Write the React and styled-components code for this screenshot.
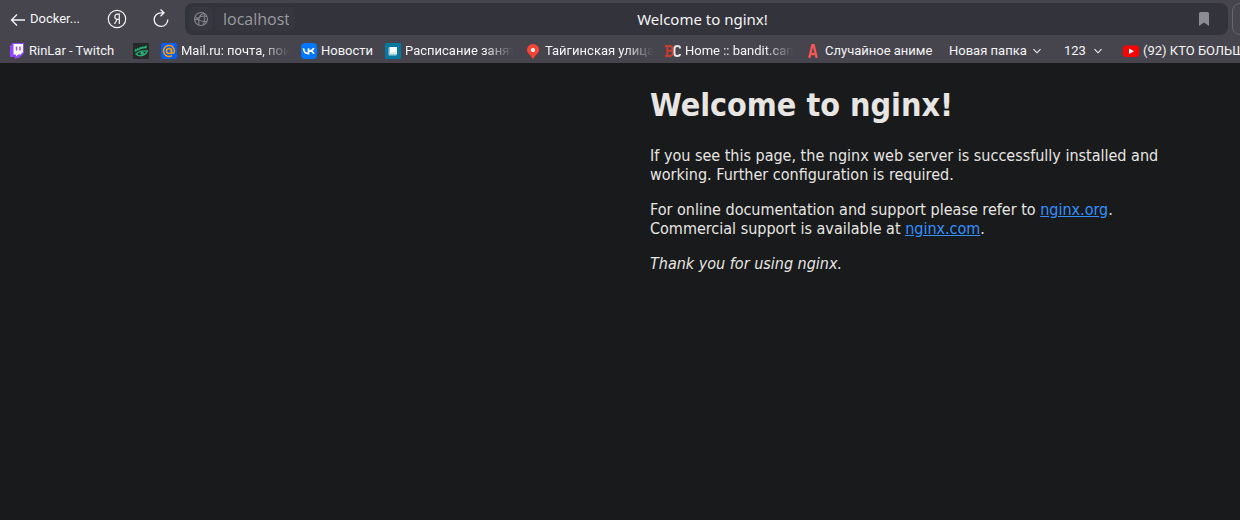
import React from "react";
import styled, { createGlobalStyle } from "styled-components";

const GlobalStyle = createGlobalStyle`
  * { box-sizing: border-box; }
  body { margin: 0; background: #181a1b; overflow-x: hidden; }
`;

const Window = styled.div`
  min-height: 100vh;
  overflow: hidden;
  background: #181a1b;
  font-family: "Noto Sans", sans-serif;
`;

const Chrome = styled.header`
  background: #46454e;
  color: #f4f4f5;
`;

const Toolbar = styled.div`
  display: flex;
  align-items: center;
  height: 38px;
  padding-left: 10px;
`;

const ToolButton = styled.button`
  display: flex;
  align-items: center;
  flex: none;
  width: ${(p) => p.$width}px;
  height: 24px;
  gap: 4px;
  padding: 0;
  border: 0;
  background: none;
  color: inherit;
  font: 13px/20px Roboto, sans-serif;
  white-space: nowrap;
`;

const AddressBar = styled.div`
  flex: 1;
  display: grid;
  grid-template-columns: 110px 1fr 118px;
  align-items: center;
  height: 32px;
  border-radius: 8px;
  background: #33333b;
`;

const Site = styled.div`
  display: flex;
  gap: 2px;
  padding-left: 4px;
`;

const SiteInfo = styled.button`
  display: grid;
  place-items: center;
  flex: none;
  width: 24px;
  height: 24px;
  padding: 0;
  border: 0;
  border-radius: 6px;
  background: #37373f;
  color: #85848b;
`;

const AddressInput = styled.input`
  flex: none;
  width: 80px;
  height: 24px;
  padding: 0 6px 0 8px;
  border: 0;
  border-radius: 6px;
  background: #36363e;
  color: #9b9aa1;
  font: 16px/24px "Open Sans", "Noto Sans", sans-serif;
`;

const PageTitle = styled.div`
  text-align: center;
  font-size: 15px;
  line-height: 24px;
  white-space: nowrap;
`;

const SaveButton = styled.button`
  justify-self: end;
  display: grid;
  place-items: center;
  width: 24px;
  height: 24px;
  margin-right: 12px;
  padding: 0;
  border: 0;
  background: none;
  color: #8c8b91;
`;

const EdgeButton = styled.button`
  flex: none;
  width: 32px;
  height: 32px;
  margin: 0 -24px 0 4px;
  border: 1px solid #66656d;
  border-radius: 8px;
  background: none;
`;

const Bookmarks = styled.nav`
  display: flex;
  align-items: center;
  gap: 12px;
  height: 25px;
  padding-left: 9px;
  overflow: hidden;
`;

const Bookmark = styled.a`
  display: flex;
  align-items: center;
  flex: none;
  gap: 4px;
  color: inherit;
  text-decoration: none;
`;

const Folder = styled.button`
  display: flex;
  align-items: center;
  justify-content: space-between;
  flex: none;
  width: ${(p) => p.$width}px;
  margin-left: ${(p) => p.$space}px;
  padding: 0;
  border: 0;
  background: none;
  color: inherit;
  font: 13px/20px Roboto, sans-serif;
  white-space: nowrap;
`;

const LastBookmark = styled(Bookmark)`
  margin-left: 8px;
`;

const Label = styled.span`
  width: ${(p) => p.$width}px;
  overflow: ${(p) => (p.$fade ? "hidden" : "visible")};
  white-space: nowrap;
  font: 13px/20px Roboto, sans-serif;
  mask-image: ${(p) =>
    p.$fade ? "linear-gradient(to right, #000 calc(100% - 28px), transparent)" : "none"};
`;

const Page = styled.main`
  width: 560px;
  max-width: 100%;
  margin: 0 30px 0 auto;
  padding-top: 22px;
  color: #e8e6e3;
  font-family: Tahoma, "DejaVu Sans Condensed", "DejaVu Sans", sans-serif;
  font-stretch: condensed;
  font-size: 16px;
  line-height: 19px;
`;

const Heading = styled.h1`
  margin: 0 0 21px;
  font-size: 32px;
  line-height: 40px;
  font-weight: bold;
`;

const Paragraph = styled.p`
  margin: 0 0 16px;
`;

const Link = styled.a`
  color: #3391ff;
`;

const Stroke = ({ size = 16, children, ...rest }) => (
  <svg width={size} height={size} viewBox={`0 0 ${size} ${size}`} fill="none" stroke="currentColor" aria-hidden="true" {...rest}>
    {children}
  </svg>
);

const Favicon = ({ children }) => (
  <svg width="16" height="16" viewBox="0 0 16 16" aria-hidden="true">
    {children}
  </svg>
);

const Chevron = () => (
  <Stroke size={10} strokeWidth="1.1">
    <path d="M1.5 3.2 5 6.8 8.5 3.2" />
  </Stroke>
);

const icons = {
  twitch: (
    <Favicon>
      <path d="M3.5 0H15v10l-5 5H8l-2 1v-2H1V3z" fill="#9146ff" />
      <path d="M4.5 1H14v8l-2.5 2.5H9L7 13.5v-2H4.5z" fill="#fff" />
      <path d="M7.5 3.5v4M11 3.5v4" stroke="#9146ff" strokeWidth="1.4" />
    </Favicon>
  ),
  eye: (
    <Favicon>
      <rect width="16" height="16" rx="1" fill="#25292a" />
      <path d="M1.500 8.200 2.500 5.500l1.200 1 .8-1.800 1.200 1L7 3.800l1.200.8 1.400-1.600.8 1L13.500 2.200l.3 3C9 5.500 5.500 6.500 2 9z" fill="#27b06f" />
      <path d="M3 11C5.500 8.500 10 7.500 14.300 8 13 12 7 14.500 3 11z" fill="none" stroke="#27b06f" strokeWidth="1.400" />
      <circle cx="9.200" cy="10.200" r="1.700" fill="#27b06f" />
    </Favicon>
  ),
  mail: (
    <Favicon>
      <rect width="16" height="16" rx="2" fill="#005ff9" />
      <g fill="none" stroke="#ff9e00" strokeWidth="1.5">
        <circle cx="8" cy="8" r="2.5" />
        <path d="M10.500 5.500v3.500c0 2 3 1.800 3-1A5.500 5.500 0 1 0 11 12.600" />
      </g>
    </Favicon>
  ),
  vk: (
    <Favicon>
      <rect width="16" height="16" rx="4" fill="#0077ff" />
      <path d="M2.500 5.200c.3 3.500 2 5.400 5 5.400V5.200M12.800 5.200C12 7 10.500 8 7.800 8c2.700 0 4.500 1 5.200 2.700" fill="none" stroke="#fff" strokeWidth="1.700" />
    </Favicon>
  ),
  schedule: (
    <Favicon>
      <rect width="16" height="16" rx="1" fill="#0779a1" />
      <path d="M4.500 4h7.500v7.500H4.500z" fill="#fff" />
      <path d="M4 4.500v7.500h7.500" fill="none" stroke="#a6d3e2" />
      <path d="M5.500 10h6" stroke="#b1c8d0" strokeWidth=".8" />
    </Favicon>
  ),
  pin: (
    <Favicon>
      <path d="M8 1a6 6 0 0 0-6 6c0 3.500 4 4.500 5.400 8.500h1.200C10 11.500 14 10.500 14 7a6 6 0 0 0-6-6z" fill="#f43" />
      <circle cx="8" cy="7" r="2.100" fill="#fff" />
    </Favicon>
  ),
  bandit: (
    <Favicon>
      <path d="M0 3h6M0 13h6M2.300 3v10M4 3.200h1.300a2.200 2.200 0 0 1 0 4.600H3h2.500a2.500 2.500 0 0 1 0 5" fill="none" stroke="#c83d2e" strokeWidth="2" />
      <path d="M15 5.500V4.700C15 2.300 9.500 2 9.500 5.500v5c0 3.500 5.500 3 5.500.5" fill="none" stroke="#e4e4e6" strokeWidth="2" />
    </Favicon>
  ),
  anime: (
    <Favicon>
      <path d="M4.300 15 7.300 2.200h1.400L11.700 15M5.500 11h5" fill="none" stroke="#f45656" strokeWidth="2.300" />
    </Favicon>
  ),
  video: (
    <Favicon>
      <rect y="2.500" width="16" height="11.500" rx="3" fill="#f00" />
      <path d="m6 5.500 5 2.700-5 2.700z" fill="#fff" />
    </Favicon>
  ),
};

const bookmarks = [
  { icon: "twitch", text: "RinLar - Twitch", width: 92 },
  { icon: "eye", name: "Закладка" },
  { icon: "mail", text: "Mail.ru: почта, пои", width: 108, fade: true },
  { icon: "vk", text: "Новости", width: 52 },
  { icon: "schedule", text: "Расписание занят", width: 108, fade: true },
  { icon: "pin", text: "Тайгинская улица", width: 108, fade: true },
  { icon: "bandit", text: "Home :: bandit.cam", width: 108, fade: true },
  { icon: "anime", text: "Случайное аниме", width: 108 },
];

export default function App() {
  return (
    <Window>
      <GlobalStyle />
      <Chrome>
        <Toolbar>
          <ToolButton $width={97}>
            <Stroke strokeWidth="1.3">
              <path d="M15 9H1.500M7 3.500 1.500 9 7 14.500" />
            </Stroke>
            Docker...
          </ToolButton>
          <ToolButton $width={44} aria-label="Яндекс">
            <Stroke size={20} strokeWidth="1.2">
              <circle cx="10" cy="10" r="8.700" />
              <path d="M12.300 15V5.200H10.500C7 5.200 7 10.300 10.500 10.300h1.800M10.200 10.300 7.500 15" />
            </Stroke>
          </ToolButton>
          <ToolButton $width={34} aria-label="Обновить">
            <Stroke size={20} strokeWidth="1.3">
              <path d="M12.500 3.800H10A6.800 6.800 0 1 0 16.800 10.500M9.500.500l3.500 3.300L9.500 7.200" />
            </Stroke>
          </ToolButton>
          <AddressBar>
            <Site>
              <SiteInfo aria-label="О сайте">
                <Stroke strokeWidth="1.1">
                  <circle cx="8" cy="8" r="6.500" />
                  <path d="M10.500 2C6.500 4 5 8.500 6 14.200M2.200 5.500C4.500 9 9.500 11 14 10.500M10.500 2c2 3 1.500 8.500-.500 12M1.700 9.500C4 6.500 9 4.500 13.500 5.200" />
                </Stroke>
              </SiteInfo>
              <AddressInput aria-label="Адрес" defaultValue="localhost" />
            </Site>
            <PageTitle>Welcome to nginx!</PageTitle>
            <SaveButton aria-label="В закладки">
              <svg width="12" height="14" viewBox="0 0 12 14" aria-hidden="true">
                <path d="M1 1.500Q1 0 2.500 0h7Q11 0 11 1.500V14l-5-3.500L1 14z" fill="currentColor" />
              </svg>
            </SaveButton>
          </AddressBar>
          <EdgeButton aria-label="Меню" />
        </Toolbar>
        <Bookmarks>
          {bookmarks.map((b) => (
            <Bookmark key={b.icon} href="#" aria-label={b.name}>
              {icons[b.icon]}
              {b.text && <Label $width={b.width} $fade={b.fade}>{b.text}</Label>}
            </Bookmark>
          ))}
          <Folder $width={93} $space={4}>Новая папка<Chevron /></Folder>
          <Folder $width={39} $space={10}>123<Chevron /></Folder>
          <LastBookmark href="#">
            {icons.video}
            <Label $width={120}>(92) КТО БОЛЬШЕ</Label>
          </LastBookmark>
        </Bookmarks>
      </Chrome>
      <Page>
        <Heading>Welcome to nginx!</Heading>
        <Paragraph>
          If you see this page, the nginx web server is successfully installed and
          working. Further configuration is required.
        </Paragraph>
        <Paragraph>
          For online documentation and support please refer to <Link href="http://nginx.org/">nginx.org</Link>.
          <br />
          Commercial support is available at <Link href="http://nginx.com/">nginx.com</Link>.
        </Paragraph>
        <Paragraph><em>Thank you for using nginx.</em></Paragraph>
      </Page>
    </Window>
  );
}
